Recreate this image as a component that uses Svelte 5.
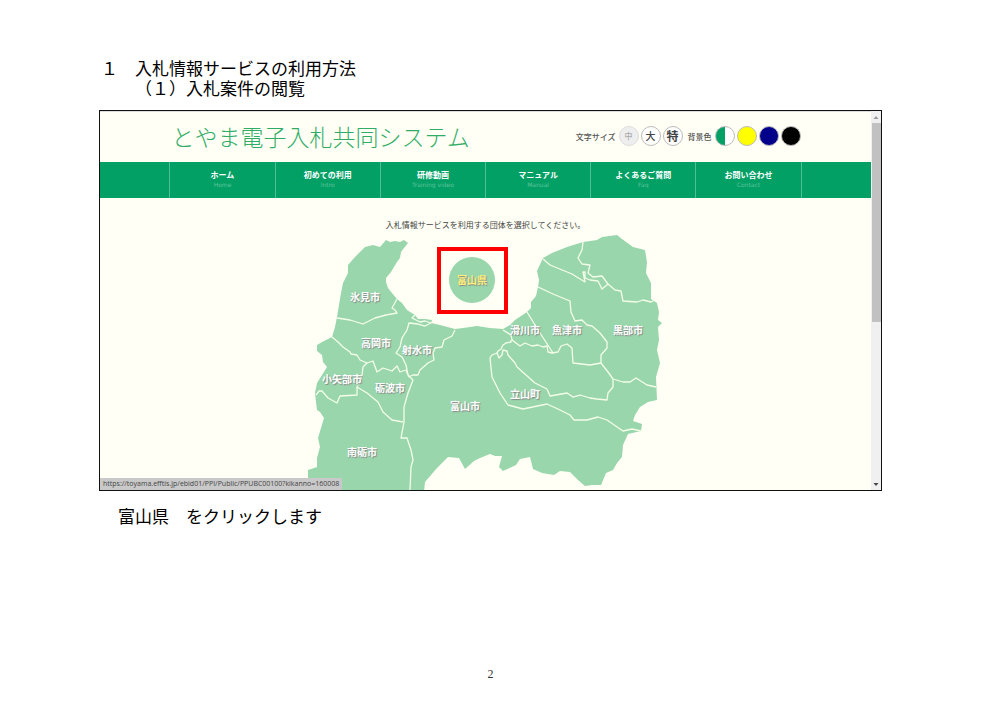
<script>
    const menu = [
        { label: "ホーム", sub: "Home" },
        { label: "初めての利用", sub: "Intro" },
        { label: "研修動画", sub: "Training video" },
        { label: "マニュアル", sub: "Manual" },
        { label: "よくあるご質問", sub: "Faq" },
        { label: "お問い合わせ", sub: "Contact" },
    ];

    const sizes = [
        { label: "中", name: "medium" },
        { label: "大", name: "large" },
        { label: "特", name: "extra" },
    ];

    const themes = [
        { name: "standard", label: "標準" },
        { name: "yellow", label: "黄" },
        { name: "blue", label: "青" },
        { name: "black", label: "黒" },
    ];

    const outline =
        "386,240 390,242 395,241 400,242 404,240 408,243 404,248 401,252 400,258 397,262 391,272 386,278 386,282 388,288 392,293 397,299 402,303 407,310 415,315 418,319 425,319 432,320 431,323 440,325 455,329 463,328 477,326 490,328 503,329 510,325 515,320 527,312 531,308 531,302 536,296 538,287 539,280 537,271 543,258 552,253 567,247 583,242 597,240 602,237 617,235 622,239 633,247 645,250 647,262 646,273 651,283 651,299 657,303 659,312 658,320 662,323 658,327 659,340 657,350 660,363 656,377 657,400 648,402 640,407 635,415 633,421 642,424 641,431 628,434 623,445 622,457 617,463 613,470 606,473 601,485 592,485 585,486 578,480 570,472 560,471 554,475 542,473 533,469 530,457 520,459 516,465 503,471 499,467 502,456 495,456 490,454 480,458 474,461 465,469 459,458 448,457 437,468 425,482 424,492 308,492 308,470 317,467 317,458 320,447 318,438 324,418 320,412 317,410 316,402 315,393 317,383 322,375 327,367 323,362 322,355 317,351 317,345 322,342 332,337 335,327 337,317 339,305 341,293 343,283 348,273 348,265 355,257 365,247 373,245 380,247";

    const borders = [
        "337,318 350,320 363,324 375,318 386,315 397,313 395,310 392,308 397,299",
        "415,315 412,318 420,322 425,321 431,323 425,326 418,324 409,323 407,330 402,338 400,347 396,353 402,357 406,365 408,375",
        "455,330 452,336 444,340 442,347 435,348 433,353 434,360 428,363 420,370 418,375 413,375 408,377",
        "332,337 338,342 343,347 350,352 351,354 357,355 360,360 367,363 363,367 362,375 360,382 357,387 357,395 340,396 337,403 328,398 322,391 319,391 316,395",
        "367,363 373,361 377,372 383,368 392,371 397,366 400,372 406,370 408,375 413,380 408,393 404,407 404,422 401,438 407,438 411,450 413,460 411,467 410,490",
        "357,387 367,393 378,402 383,412 392,420 403,422",
        "583,242 582,250 578,258 582,264 590,265 588,273 593,277 602,276 608,284 602,289 598,281 590,280 585,278 585,272 583,272 585,282 572,274 550,265 543,259",
        "608,284 615,290 621,291 623,301 637,302 643,300 651,302 655,300",
        "538,287 553,294 570,301 571,312 575,321 582,320 587,325 592,326 600,333 607,342 607,348 601,355 601,363 590,365 573,363 572,348 567,344 561,346 558,352 552,353 548,352 547,346 543,347 538,345 532,346 525,343 520,346 512,340 511,335 503,330",
        "527,312 540,333 553,353",
        "601,363 608,372 613,379 623,382 630,382 636,378 647,385 656,387",
        "613,379 613,387 608,393 607,400 597,399 590,398 580,395 573,397 567,393 550,396 547,389 535,383 526,375 517,367 515,363 508,355 507,351 503,350 502,355 499,358 497,353 492,355 490,358 492,377 500,393 508,405 523,409 547,404 560,410 570,415 574,420 587,420 598,417 607,420 623,431 632,429 641,431",
        "497,353 498,351 501,349 503,345 506,343 511,342 511,340",
    ];

    const cities = [
        { name: "氷見市", x: 365, y: 301 },
        { name: "高岡市", x: 376, y: 347 },
        { name: "射水市", x: 417, y: 354 },
        { name: "小矢部市", x: 342, y: 383 },
        { name: "砺波市", x: 390, y: 392 },
        { name: "南砺市", x: 362, y: 456 },
        { name: "富山市", x: 465, y: 410 },
        { name: "滑川市", x: 525, y: 334 },
        { name: "魚津市", x: 567, y: 334 },
        { name: "黒部市", x: 628, y: 334 },
        { name: "立山町", x: 525, y: 398 },
    ];
</script>

<main>
    <h1>１　入札情報サービスの利用方法</h1>
    <h2>　　（１）入札案件の閲覧</h2>

    <div class="window">
        <div class="site">
            <header>
                <div class="inner">
                    <div class="logo">とやま電子入札共同システム</div>
                    <div class="tools">
                        <span>文字サイズ</span>
                        <div class="group">
                            {#each sizes as size}
                                <button class="round {size.name}">{size.label}</button>
                            {/each}
                        </div>
                        <span>背景色</span>
                        <div class="group">
                            {#each themes as theme}
                                <button class="round {theme.name}" aria-label={theme.label}></button>
                            {/each}
                        </div>
                    </div>
                </div>
            </header>

            <nav>
                <ul class="inner">
                    {#each menu as item}
                        <li>
                            <a href="#{item.sub}">
                                <b>{item.label}</b>
                                <small>{item.sub}</small>
                            </a>
                        </li>
                    {/each}
                </ul>
            </nav>

            <p class="lead">入札情報サービスを利用する団体を選択してください。</p>

            <svg class="map" viewBox="300 232 371 258">
                <polygon class="land" points={outline} />
                {#each borders as points}
                    <polyline class="border" {points} />
                {/each}
                {#each cities as city}
                    <a href="#{city.name}">
                        <text x={city.x} y={city.y}>{city.name}</text>
                    </a>
                {/each}
                <a href="#富山県">
                    <circle class="land" cx="472" cy="280" r="23" />
                    <text class="current" x="472" y="284">富山県</text>
                </a>
                <rect class="mark" x="439" y="249" width="67" height="63" />
            </svg>
        </div>

        <div class="scrollbar">
            <svg viewBox="0 0 10 12"><path d="M2.5 8 L5 5 L7.5 8z" fill="#999" /></svg>
            <div class="track"><div class="thumb"></div></div>
            <svg viewBox="0 0 10 12"><path d="M2.5 5 L5 8 L7.5 5z" fill="#444" /></svg>
        </div>

        <div class="status">https://toyama.efftis.jp/ebid01/PPI/Public/PPUBC00100?kikanno=160008</div>
    </div>

    <p class="caption">富山県　をクリックします</p>
    <footer>2</footer>
</main>

<style>
    :global(body) {
        background-color: #fff;
    }

    * {
        box-sizing: border-box;
    }

    main {
        padding: 58px 118px 20px 99px;
        color: #000;
        font-family: "Noto Sans CJK JP", sans-serif;
    }

    h1,
    h2,
    .caption {
        margin: 0;
        font-weight: 400;
        font-size: 17px;
        line-height: 20px;
        text-spacing-trim: space-all;
    }

    h1,
    h2 {
        padding-left: 2px;
        white-space: pre;
    }

    /* Browser window */
    .window {
        position: relative;
        display: flex;
        margin-top: 12px;
        background-color: #fffff5;
        border: 1px solid #111;
    }

    .site {
        flex: 1;
        min-width: 0;
        border-top: 1px solid #ddd;
    }

    .inner {
        display: flex;
        width: 82%;
        margin: 0 auto;
    }

    header .inner {
        align-items: center;
        justify-content: space-between;
        height: 50px;
        padding: 0 1px 2px 2px;
        white-space: nowrap;
    }

    .logo {
        color: #2fad66;
        font-weight: 300;
        font-size: 23px;
        line-height: 30px;
    }

    .tools,
    .group {
        display: flex;
        align-items: center;
    }

    .tools {
        gap: 3px;
        color: #555;
        font-weight: 500;
        font-size: 8px;
    }

    .group {
        gap: 2px;
    }

    .group + span {
        margin-left: 2px;
    }

    .round {
        display: flex;
        align-items: center;
        justify-content: center;
        width: 20px;
        height: 20px;
        padding: 0;
        color: #444;
        font-weight: 500;
        font-family: inherit;
        line-height: 12px;
        background-color: #fff;
        border: 1px solid #bbb;
        border-radius: 50%;
    }

    .medium {
        color: #aaa;
        font-size: 8px;
        background-color: #eee;
        border-color: #ddd;
    }

    .large {
        font-size: 10px;
    }

    .extra {
        font-weight: 700;
        font-size: 12px;
    }

    .standard {
        background: linear-gradient(90deg, #03a066 50%, #fff 50%);
    }

    .yellow {
        background-color: #ff0;
    }

    .blue {
        background-color: #00008b;
    }

    .black {
        background-color: #000;
    }

    /* Menu */
    nav {
        background-color: #03a066;
    }

    ul {
        padding: 0;
        list-style: none;
        border-left: 1px solid #4fbe94;
    }

    li {
        flex: 1;
        border-right: 1px solid #4fbe94;
    }

    li a {
        display: block;
        height: 36px;
        padding-top: 7px;
        color: #fff;
        text-align: center;
        text-decoration: none;
    }

    b,
    small {
        display: block;
    }

    b {
        font-size: 8px;
        line-height: 12px;
    }

    small {
        color: #5fc29b;
        font-size: 6px;
        font-family: "DejaVu Sans", sans-serif;
        line-height: 8px;
    }

    .lead {
        margin: 0;
        padding-top: 20px;
        color: #444;
        font-size: 8px;
        line-height: 14px;
        text-align: center;
    }

    /* Map */
    .map {
        display: block;
        width: 100%;
        max-width: 371px;
        margin: 0 auto;
    }

    .land {
        fill: #99d6ac;
    }

    .border {
        fill: none;
        stroke: #f4fde9;
        stroke-width: 1.3;
        stroke-linejoin: round;
    }

    .map text {
        font-weight: 700;
        font-size: 10px;
        text-anchor: middle;
        text-shadow: 1px 1px 1px #888;
        fill: #fff;
    }

    .map .current {
        fill: #ffef7a;
    }

    .mark {
        fill: none;
        stroke: #f00;
        stroke-width: 4;
        pointer-events: none;
    }

    .scrollbar {
        display: flex;
        flex-direction: column;
        width: 10px;
        background-color: #f0f0f0;
    }

    .scrollbar svg {
        height: 12px;
    }

    .track {
        flex: 1;
    }

    .thumb {
        height: 56%;
        margin-left: 1px;
        background-color: #c1c1c1;
    }

    .status {
        position: absolute;
        bottom: 0;
        left: 0;
        padding: 0 3px;
        color: #444;
        font-size: 7px;
        font-family: "Open Sans", sans-serif;
        line-height: 12px;
        background-color: #c9c9c9;
    }

    .caption {
        margin-top: 15px;
        padding-left: 19px;
    }

    footer {
        margin-top: 140px;
        color: #333;
        font-size: 12px;
        font-family: "Liberation Serif", serif;
        line-height: 16px;
        text-align: center;
    }
</style>
